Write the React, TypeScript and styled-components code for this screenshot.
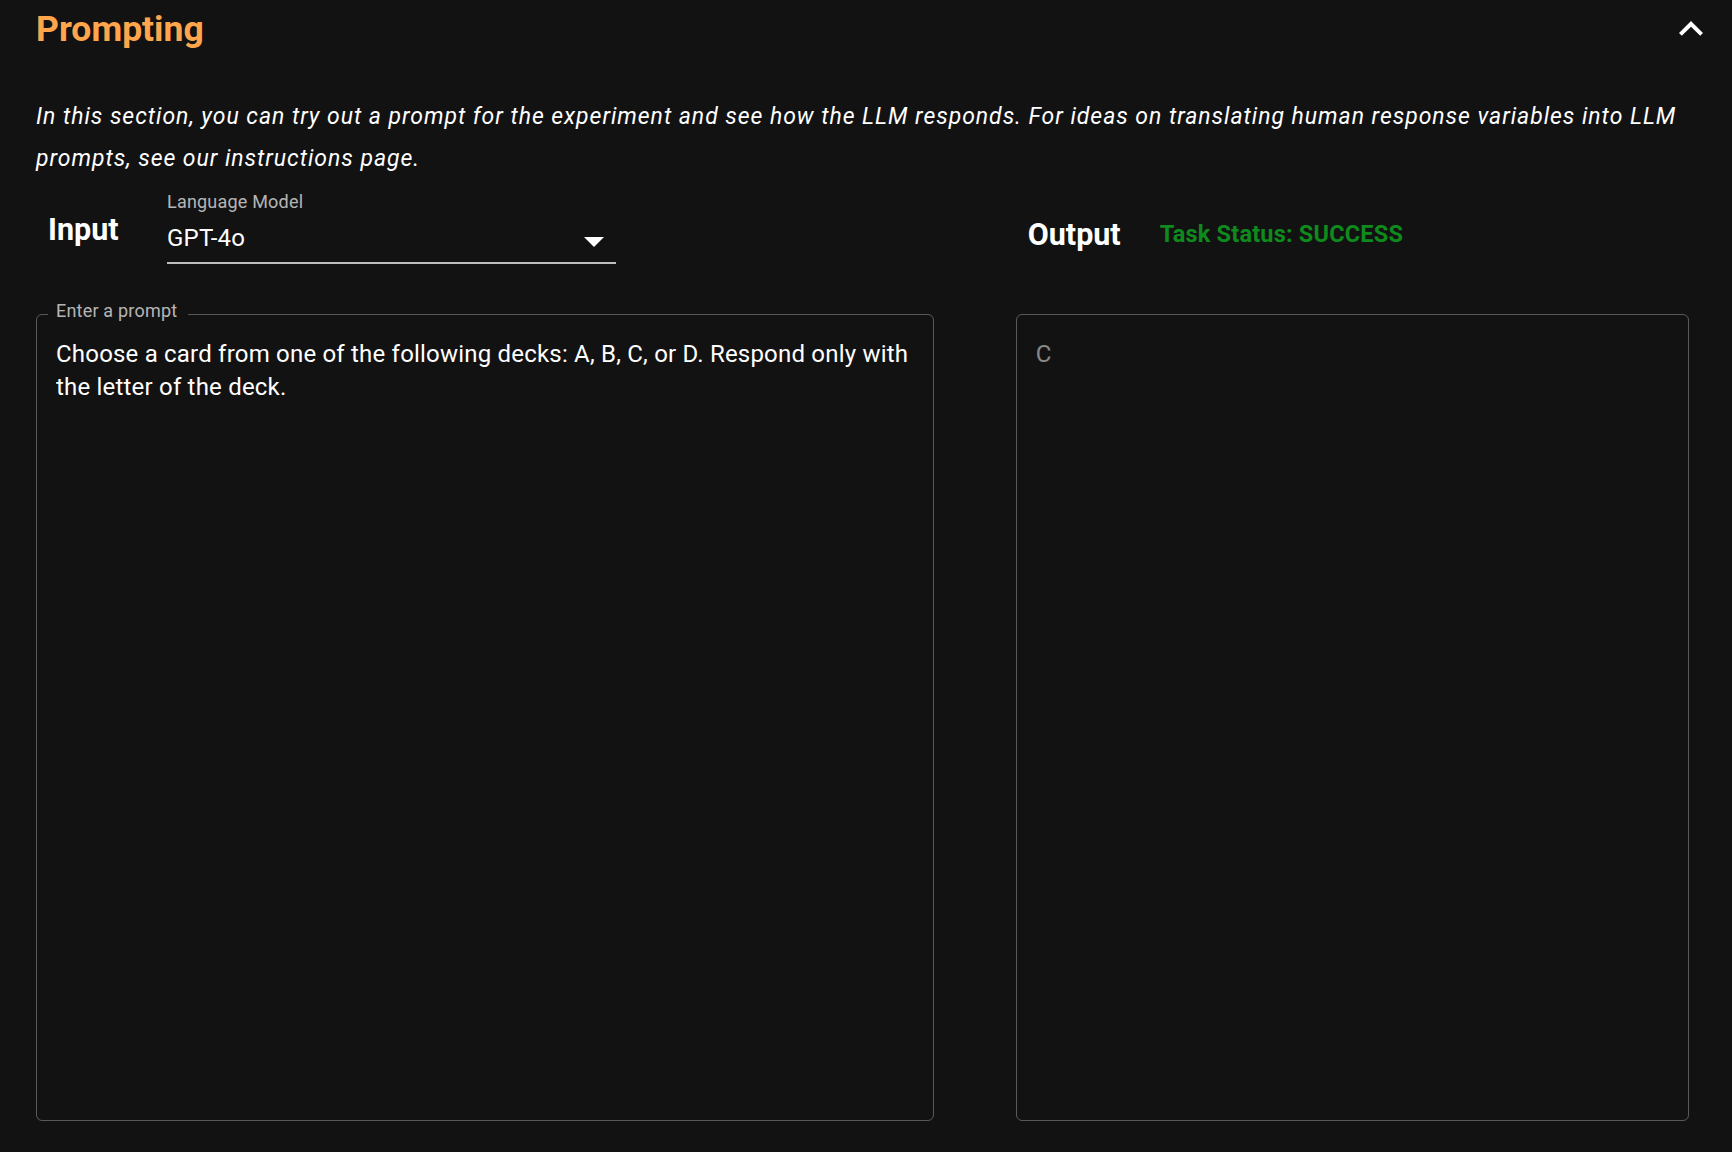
import React from "react";
import styled, { createGlobalStyle } from "styled-components";

const GlobalStyle = createGlobalStyle`
  * {
    box-sizing: border-box;
  }
  html,
  body {
    margin: 0;
    background: #121212;
  }
  body {
    font-family: Roboto, "Noto Sans", "Liberation Sans", sans-serif;
    color: #ffffff;
  }
`;

function ExpandLessIcon() {
  return (
    <svg width="48" height="48" viewBox="0 0 24 24" fill="currentColor" aria-hidden>
      <path d="M12 8l-6 6 1.41 1.41L12 10.83l4.59 4.58L18 14z" />
    </svg>
  );
}

function DropArrow() {
  return (
    <svg width="20" height="10" viewBox="0 0 20 10" fill="currentColor" aria-hidden>
      <polygon points="0,0 20,0 10,10" />
    </svg>
  );
}

export default function App() {
  return (
    <>
      <GlobalStyle />
      <Page>
        <SectionHeader>
          <Title>Prompting</Title>
          <CollapseButton aria-label="collapse">
            <ExpandLessIcon />
          </CollapseButton>
        </SectionHeader>
        <Intro>
          In this section, you can try out a prompt for the experiment and see how the LLM
          responds. For ideas on translating human response variables into LLM prompts, see our
          instructions page.
        </Intro>
        <Columns>
          <Column>
            <ColumnHeader $lead={119}>
              <Heading $offset={17}>Input</Heading>
              <ModelSelect>
                <FieldLabel>Language Model</FieldLabel>
                <SelectBox>
                  <SelectValue>GPT-4o</SelectValue>
                  <ArrowSlot>
                    <DropArrow />
                  </ArrowSlot>
                </SelectBox>
              </ModelSelect>
            </ColumnHeader>
            <OutlinedField>
              <Notch>Enter a prompt</Notch>
              <FieldText
                defaultValue="Choose a card from one of the following decks: A, B, C, or D. Respond only with the letter of the deck."
              />
            </OutlinedField>
          </Column>
          <Column>
            <ColumnHeader $lead={132}>
              <Heading $offset={22}>Output</Heading>
              <Status>Task Status: SUCCESS</Status>
            </ColumnHeader>
            <OutlinedField>
              <Notch $empty />
              <FieldText $muted readOnly value="C" />
            </OutlinedField>
          </Column>
        </Columns>
      </Page>
    </>
  );
}

const Page = styled.div`
  display: flex;
  flex-direction: column;
  height: 100vh;
  padding: 0 43px 31px 36px;
`;

const SectionHeader = styled.header`
  display: flex;
  align-items: center;
  justify-content: space-between;
  height: 58px;
  margin-right: -26px;
`;

const Title = styled.h2`
  margin: 0;
  font-size: 35.5px;
  font-weight: 700;
  line-height: 46px;
  color: #ffa64d;
`;

const CollapseButton = styled.button`
  all: unset;
  display: grid;
  place-items: center;
  width: 48px;
  height: 48px;
  color: #ffffff;
  cursor: pointer;
`;

const Intro = styled.p`
  margin: 38px 0 0;
  font-size: 23px;
  font-style: italic;
  letter-spacing: 0.96px;
  line-height: 42px;
`;

const Columns = styled.div`
  flex: 1;
  display: grid;
  grid-template-columns: 4fr 3fr;
  column-gap: 82px;
  min-height: 0;
`;

const Column = styled.section`
  display: flex;
  flex-direction: column;
  min-width: 0;
`;

const ColumnHeader = styled.div<{ $lead: number }>`
  display: grid;
  grid-template-columns: ${(p) => p.$lead}px auto;
  align-items: start;
  height: 119px;
  padding: 10px 0 0 12px;
`;

const Heading = styled.h3<{ $offset: number }>`
  margin: ${(p) => p.$offset}px 0 0;
  font-size: 30.5px;
  font-weight: 700;
  line-height: 46px;
`;

const Status = styled.span`
  margin-top: 27.7px;
  font-size: 23.5px;
  font-weight: 700;
  letter-spacing: 0.2px;
  line-height: 33px;
  color: #0f8a1d;
`;

const ModelSelect = styled.div`
  display: flex;
  flex-direction: column;
  width: 449px;
`;

const FieldLabel = styled.label`
  font-size: 18px;
  letter-spacing: 0.2px;
  line-height: 24px;
  color: rgba(255, 255, 255, 0.7);
`;

const SelectBox = styled.div`
  display: flex;
  align-items: center;
  justify-content: space-between;
  margin-top: 2px;
  padding: 6px 12px 7px 0;
  border-bottom: 2px solid rgba(255, 255, 255, 0.72);
  cursor: pointer;
`;

const SelectValue = styled.span`
  font-size: 24px;
  letter-spacing: 0.2px;
  line-height: 33px;
`;

const ArrowSlot = styled.span`
  display: flex;
  margin-top: 6px;
  color: #ffffff;
`;

const OutlinedField = styled.fieldset`
  flex: 1;
  display: flex;
  flex-direction: column;
  min-height: 0;
  margin: 0;
  padding: 0 14px 0 19px;
  border: 1.5px solid rgba(255, 255, 255, 0.3);
  border-radius: 6px;
`;

const Notch = styled.legend<{ $empty?: boolean }>`
  height: 30px;
  margin-left: ${(p) => (p.$empty ? 0 : -8)}px;
  padding: ${(p) => (p.$empty ? "0" : "0 11px 6px 8px")};
  font-size: 18px;
  letter-spacing: 0.2px;
  line-height: 24px;
  color: rgba(255, 255, 255, 0.7);
`;

const FieldText = styled.textarea<{ $muted?: boolean }>`
  flex: 1;
  margin: 9px 0 0;
  padding: 0;
  border: 0;
  outline: none;
  resize: none;
  overflow: hidden;
  background: transparent;
  font-family: Roboto, "Noto Sans", "Liberation Sans", sans-serif;
  font-size: 24px;
  letter-spacing: 0.2px;
  line-height: 33px;
  color: ${(p) => (p.$muted ? "rgba(255, 255, 255, 0.5)" : "#ffffff")};
`;
